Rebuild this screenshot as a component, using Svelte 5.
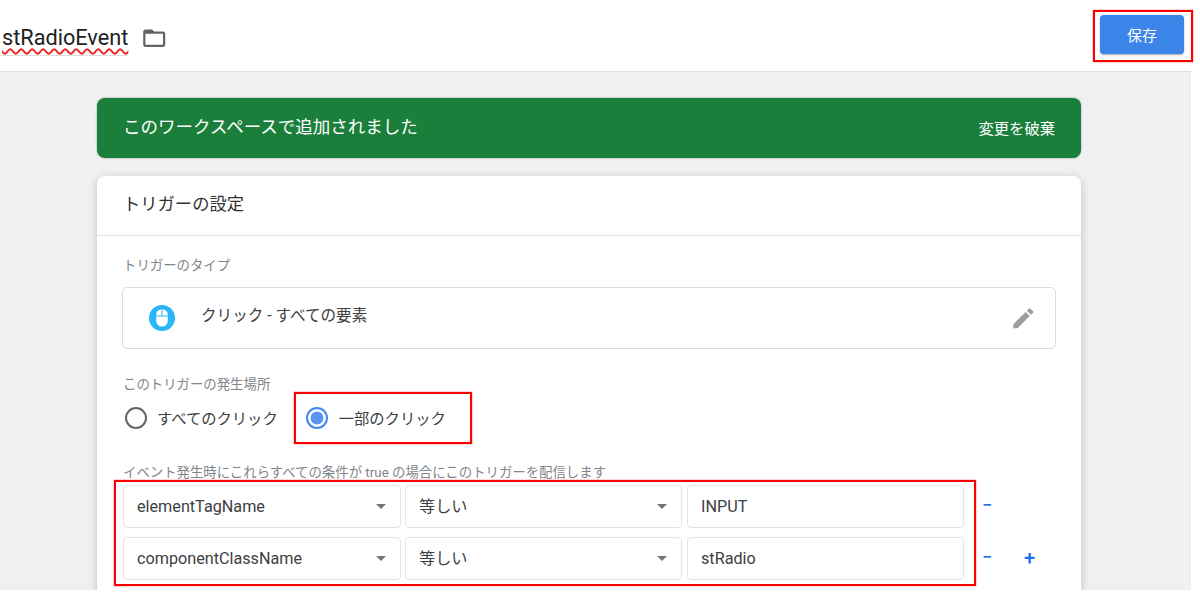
<script lang="ts">
  const conditions = [
    { variable: "elementTagName", op: "等しい", value: "INPUT", canAdd: false },
    { variable: "componentClassName", op: "等しい", value: "stRadio", canAdd: true }
  ];
</script>

<div class="shot">
  <div class="page">
    <header class="topbar">
      <div class="title-wrap">
        <span class="title">stRadioEvent</span>
        <svg class="folder" viewBox="0 0 24 24" width="26.400" height="26.400">
          <path fill="#5f6368" d="M20 6h-8l-2-2H4c-1.100 0-2 .9-2 2v12c0 1.100.9 2 2 2h16c1.100 0 2-.9 2-2V8c0-1.100-.9-2-2-2zm0 12H4V8h16v10z" />
        </svg>
      </div>
      <button class="save">保存</button>
    </header>

    <main class="content">
      <div class="banner">
        <span class="banner-text">このワークスペースで追加されました</span>
        <span class="banner-action">変更を破棄</span>
      </div>

      <section class="card">
        <div class="card-title">トリガーの設定</div>
        <div class="card-body">
          <div class="label first">トリガーのタイプ</div>
          <div class="type-box">
            <svg class="mouse" viewBox="0 0 26 26" width="26" height="26">
              <circle cx="13" cy="13" r="13" fill="#29b6f6" />
              <path fill="#fff" d="M7.200 11.400h11.600v4.400a5.800 5.800 0 0 1-11.600 0zM7.200 10.400v-.6a5.400 5.400 0 0 1 5.300-5.600v6.200zM13.500 4.200a5.400 5.400 0 0 1 5.300 5.600v.6h-5.300z" />
            </svg>
            <span class="type-name">クリック - すべての要素</span>
            <svg class="pencil" viewBox="0 0 24 24" width="26.700" height="26.700">
              <path fill="#9e9e9e" d="M3 17.250V21h3.750L17.810 9.940l-3.750-3.750L3 17.250zM20.710 7.040a1 1 0 0 0 0-1.410l-2.340-2.340a1 1 0 0 0-1.410 0l-1.830 1.830 3.750 3.750 1.830-1.830z" />
            </svg>
          </div>

          <div class="label where">このトリガーの発生場所</div>
          <div class="radios">
            <div class="radio-item">
              <span class="radio"></span>
              <span class="radio-text">すべてのクリック</span>
            </div>
            <div class="radio-item">
              <span class="radio on"></span>
              <span class="radio-text second">一部のクリック</span>
            </div>
          </div>

          <div class="label cond">イベント発生時にこれらすべての条件が true の場合にこのトリガーを配信します</div>
          <div class="rows">
            {#each conditions as c (c.variable)}
              <div class="row">
                <div class="field select var"><span>{c.variable}</span><i class="caret"></i></div>
                <div class="field select op"><span class="op-text">{c.op}</span><i class="caret"></i></div>
                <div class="field val"><span>{c.value}</span></div>
                <span class="btn minus">−</span>
                {#if c.canAdd}<span class="btn plus">+</span>{/if}
              </div>
            {/each}
          </div>
        </div>
      </section>
    </main>
  </div>

  <div class="mark mark-save"></div>
  <div class="mark mark-radio"></div>
  <div class="mark mark-rows"></div>
</div>

<style>
  :global(body) {
    margin: 0;
    background: #fff;
  }

  .shot {
    position: relative;
    width: 1200px;
    height: 593px;
    overflow: hidden;
    font-family: Roboto, "Noto Sans CJK JP", sans-serif;
    color: #3c4043;
  }

  .page {
    width: 1191px;
    height: 590px;
    overflow: hidden;
    background: #eff0f2;
  }

  .topbar {
    display: flex;
    justify-content: space-between;
    align-items: center;
    box-sizing: border-box;
    height: 72px;
    padding: 0 7px 0 2px;
    background: #fff;
    border-bottom: 1px solid #e0e0e0;
  }

  .title-wrap {
    display: flex;
    align-items: center;
    gap: 13px;
    align-self: flex-start;
    padding-top: 25px;
  }

  .title {
    display: block;
    box-sizing: border-box;
    width: 126px;
    height: 31px;
    font-size: 21.700px;
    line-height: 26px;
    white-space: nowrap;
    color: #212121;
    text-decoration: underline wavy #f02020 1.500px;
    text-underline-offset: 3px;
    border-bottom: 1px solid #dcdcdc;
  }

  .folder {
    margin-top: -5px;
  }

  .save {
    width: 84px;
    height: 39px;
    margin-bottom: 2px;
    border: 0;
    border-radius: 4px;
    background: #3b84e8;
    color: #fff;
    font: 15px Roboto, "Noto Sans CJK JP", sans-serif;
    box-shadow: 0 1px 2px rgba(0, 0, 0, 0.35);
  }

  .content {
    padding: 26px 110px 0 97px;
  }

  .banner {
    display: flex;
    justify-content: space-between;
    align-items: center;
    height: 60px;
    padding: 0 26px;
    background: #1b7f3b;
    border-radius: 8px;
    color: #fff;
    box-shadow: 0 0 2px rgba(0, 0, 0, 0.4);
  }

  .banner-text {
    font-size: 17.500px;
    margin-top: -6px;
  }

  .banner-action {
    font-size: 15.300px;
    margin-top: -3px;
  }

  .card {
    height: 500px;
    margin-top: 18px;
    background: #fff;
    border-radius: 8px;
    box-shadow: 0 2px 10px rgba(0, 0, 0, 0.2);
  }

  .card-title {
    box-sizing: border-box;
    height: 60px;
    padding: 0 26px;
    font-size: 17.300px;
    line-height: 56px;
    color: #333;
    border-bottom: 1px solid #e0e0e0;
  }

  .card-body {
    padding: 0 25px;
  }

  .label {
    font-size: 13.400px;
    line-height: 18px;
    color: #80868b;
    padding-left: 1px;
  }

  .first {
    padding-top: 21px;
  }

  .type-box {
    display: flex;
    align-items: center;
    box-sizing: border-box;
    height: 62px;
    margin-top: 12px;
    padding: 0 18px 0 26px;
    border: 1px solid #dadce0;
    border-radius: 5px;
  }

  .type-name {
    flex: 1;
    margin-left: 26px;
    margin-top: -9px;
    font-size: 15.600px;
  }

  .where {
    margin-top: 27px;
  }

  .radios {
    display: flex;
    gap: 28px;
    margin-top: 6px;
    padding-left: 3px;
    font-size: 15.300px;
  }

  .radio-item {
    display: flex;
    align-items: center;
    gap: 11px;
    height: 36px;
  }

  .radio-text {
    margin-top: -2px;
    margin-left: -1px;
  }

  .radio-text.second {
    margin-left: 0;
  }

  .radio {
    box-sizing: border-box;
    width: 22px;
    height: 22px;
    border: 2px solid #666;
    border-radius: 50%;
  }

  .radio.on {
    border-color: #4285f4;
    background: radial-gradient(circle, #5a95f5 0 6px, #fff 6.800px);
  }

  .cond {
    margin-top: 30px;
    height: 14px;
    line-height: 14px;
  }

  .rows {
    display: flex;
    flex-direction: column;
    gap: 9px;
    margin-top: 5px;
    padding-left: 1px;
  }

  .row {
    display: flex;
    align-items: center;
    gap: 4px;
  }

  .field {
    display: flex;
    align-items: center;
    justify-content: space-between;
    box-sizing: border-box;
    height: 43px;
    padding: 0 14px 0 13px;
    border: 1px solid #e4e4e6;
    border-radius: 4px;
    font-size: 16.200px;
    color: #3c4043;
  }

  .var {
    width: 278px;
  }

  .op {
    width: 277px;
  }

  .op-text {
    margin-top: -3px;
  }

  .val {
    width: 277px;
    margin-left: 1px;
  }

  .caret {
    width: 0;
    height: 0;
    border-left: 5px solid transparent;
    border-right: 5px solid transparent;
    border-top: 5px solid #757575;
  }

  .btn {
    color: #1a73e8;
    font-size: 18px;
    font-weight: 500;
    line-height: 20px;
  }

  .minus {
    margin-left: 14px;
    width: 14px;
    margin-top: -3px;
  }

  .plus {
    margin-left: 24px;
    font-size: 20px;
    margin-top: -2px;
  }

  .mark {
    position: absolute;
    box-sizing: border-box;
    border: 2px solid #f00;
    box-shadow: 0 0 1px #f00;
  }

  .mark-save {
    left: 1093px;
    top: 10px;
    width: 100px;
    height: 52px;
  }

  .mark-radio {
    left: 294px;
    top: 392px;
    width: 178px;
    height: 52px;
  }

  .mark-rows {
    left: 114px;
    top: 480px;
    width: 862px;
    height: 106px;
  }
</style>
